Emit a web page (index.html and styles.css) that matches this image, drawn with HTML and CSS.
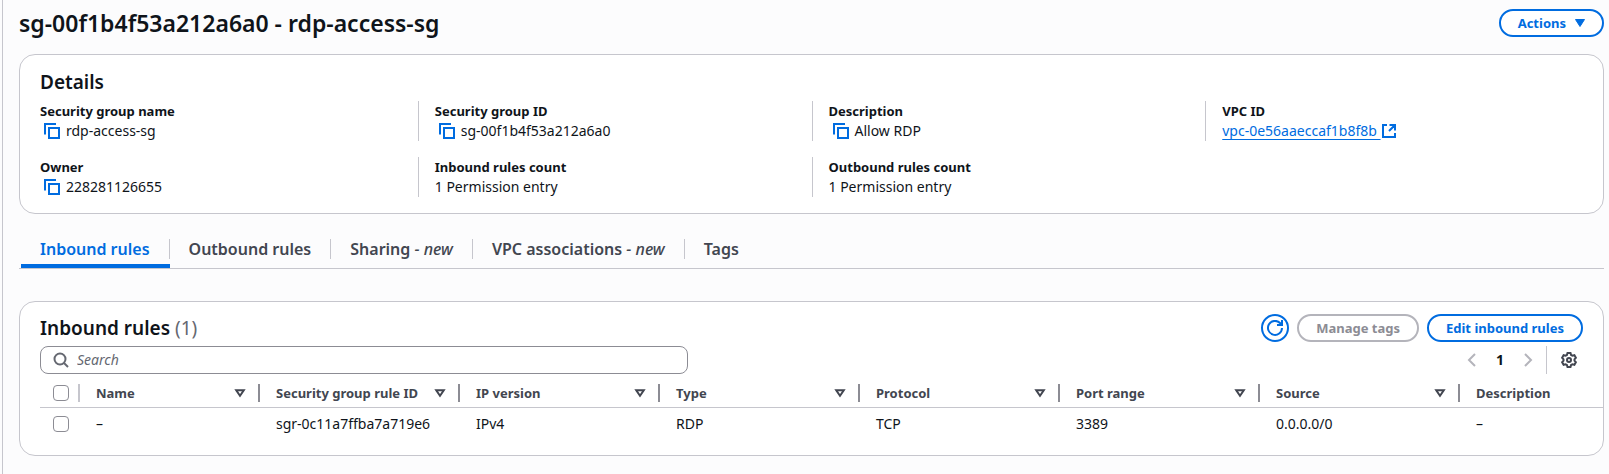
FILE: index.html
```html
<!DOCTYPE html>
<html lang="en">
<head>
<meta charset="utf-8">
<title>sg-00f1b4f53a212a6a0 - rdp-access-sg</title>
<link rel="stylesheet" href="styles.css">
</head>
<body>
<svg class="sprite" aria-hidden="true">
  <symbol id="copy" viewBox="0 0 16 16"><path d="M1 11.5V1h11M5 5h10v10H5z"/></symbol>
  <symbol id="sort" viewBox="0 0 16 16"><path d="M4.2 5.2h7.6L8 10.8z"/></symbol>
</svg>
<main class="page">
  <header class="page-header">
    <h1 class="page-title">sg-00f1b4f53a212a6a0 - rdp-access-sg</h1>
    <button class="button" type="button">Actions <svg class="icon caret" viewBox="3 0 10 16" aria-hidden="true"><path d="M3.500 4.500h9L8 11.500z"/></svg></button>
  </header>

  <section class="card details">
    <h2 class="card-title">Details</h2>
    <dl class="fields">
      <div class="field"><dt>Security group name</dt><dd><button class="copy" type="button" aria-label="Copy security group name"><svg class="icon"><use href="#copy"/></svg></button>rdp-access-sg</dd></div>
      <div class="field"><dt>Security group ID</dt><dd><button class="copy" type="button" aria-label="Copy security group ID"><svg class="icon"><use href="#copy"/></svg></button>sg-00f1b4f53a212a6a0</dd></div>
      <div class="field"><dt>Description</dt><dd><button class="copy" type="button" aria-label="Copy description"><svg class="icon"><use href="#copy"/></svg></button>Allow RDP</dd></div>
      <div class="field"><dt>VPC ID</dt><dd><a class="link" href="#vpc"><span class="link-text">vpc-0e56aaeccaf1b8f8b&nbsp;</span><svg class="icon" viewBox="0 0 16 16" aria-hidden="true"><path d="M6 2H2v12h12V10M8.500 2H14v5.500M13.500 2.500 8 8"/></svg></a></dd></div>
      <div class="field"><dt>Owner</dt><dd><button class="copy" type="button" aria-label="Copy owner"><svg class="icon"><use href="#copy"/></svg></button>228281126655</dd></div>
      <div class="field"><dt>Inbound rules count</dt><dd>1 Permission entry</dd></div>
      <div class="field"><dt>Outbound rules count</dt><dd>1 Permission entry</dd></div>
    </dl>
  </section>

  <div class="tabs" role="tablist">
    <button class="tab active" type="button" role="tab" aria-selected="true"><span>Inbound rules</span></button>
    <button class="tab" type="button" role="tab"><span>Outbound rules</span></button>
    <button class="tab" type="button" role="tab"><span>Sharing <i>- new</i></span></button>
    <button class="tab" type="button" role="tab"><span>VPC associations <i>- new</i></span></button>
    <button class="tab" type="button" role="tab"><span>Tags</span></button>
  </div>

  <section class="card rules">
    <div class="rules-header">
      <h2 class="card-title">Inbound rules <span class="counter">(1)</span></h2>
      <div class="actions">
        <button class="button round" type="button" aria-label="Refresh"><svg class="icon" viewBox="0 0 16 16" aria-hidden="true"><path d="M15 8a7 7 0 1 1-2-5l2 2M15 0v5h-5"/></svg></button>
        <button class="button" type="button" disabled>Manage tags</button>
        <button class="button" type="button">Edit inbound rules</button>
      </div>
    </div>
    <div class="tools">
      <label class="search">
        <svg class="icon" viewBox="0 0 16 16" aria-hidden="true"><circle cx="7" cy="7" r="5.500"/><path d="m11 11 4 4"/></svg>
        <input type="search" placeholder="Search" aria-label="Search">
      </label>
      <nav class="pagination" aria-label="Pagination">
        <button class="page-arrow" type="button" aria-label="Previous page" disabled><svg class="icon" viewBox="0 0 16 16"><path d="M11 2 5 8l6 6"/></svg></button>
        <button class="page-number" type="button" aria-current="page">1</button>
        <button class="page-arrow" type="button" aria-label="Next page" disabled><svg class="icon" viewBox="0 0 16 16"><path d="m5 2 6 6-6 6"/></svg></button>
        <button class="settings" type="button" aria-label="Preferences"><svg class="icon" viewBox="0 0 16 16"><circle cx="8" cy="8" r="2"/><path d="M6.500 1h3l.6 2 1.300.7 2-.5 1.500 2.600L13.500 7.300v1.400l1.400 1.500-1.500 2.600-2-.5-1.300.7-.6 2h-3l-.6-2-1.300-.7-2 .5-1.500-2.600 1.400-1.500V7.300L1.100 5.800l1.500-2.600 2 .5L5.900 3z"/></svg></button>
      </nav>
    </div>
    <table class="table">
      <colgroup><col class="col-check"><col class="col-name"><col class="col"><col class="col"><col class="col"><col class="col"><col class="col"><col class="col"><col></colgroup>
      <thead>
        <tr>
          <th class="check"><div class="head muted"><input type="checkbox" aria-label="Select all rules"></div></th>
          <th><div class="head">Name<svg class="icon"><use href="#sort"/></svg></div></th>
          <th><div class="head">Security group rule ID<svg class="icon"><use href="#sort"/></svg></div></th>
          <th><div class="head">IP version<svg class="icon"><use href="#sort"/></svg></div></th>
          <th><div class="head">Type<svg class="icon"><use href="#sort"/></svg></div></th>
          <th><div class="head">Protocol<svg class="icon"><use href="#sort"/></svg></div></th>
          <th><div class="head">Port range<svg class="icon"><use href="#sort"/></svg></div></th>
          <th><div class="head">Source<svg class="icon"><use href="#sort"/></svg></div></th>
          <th><div class="head last">Description</div></th>
        </tr>
      </thead>
      <tbody>
        <tr>
          <td class="check"><input type="checkbox" aria-label="Select rule sgr-0c11a7ffba7a719e6"></td>
          <td>–</td><td>sgr-0c11a7ffba7a719e6</td><td>IPv4</td><td>RDP</td><td>TCP</td><td>3389</td><td>0.0.0.0/0</td><td>–</td>
        </tr>
      </tbody>
    </table>
  </section>
</main>
</body>
</html>
```
FILE: styles.css
```css
* { box-sizing: border-box; }
body {
  margin: 0;
  background: #fcfcfd;
  color: #0f141a;
  font: 14px/20px "Noto Sans", "Open Sans", sans-serif;
}
button, input { font: inherit; color: inherit; }
button { padding: 0; border: 0; background: none; }
h1, h2, dl, dd { margin: 0; }
.sprite { display: none; }
.icon {
  width: 16px;
  height: 16px;
  flex: none;
  display: block;
  fill: none;
  stroke: currentColor;
  stroke-width: 2;
}
.page {
  min-height: 100vh;
  margin-left: 2px;
  padding: 9px 5px 18px 16px;
  border-left: 1px solid #c6c6cd;
}
.page-header {
  display: flex;
  justify-content: space-between;
  align-items: center;
  margin-bottom: 17px;
}
.page-title { font-size: 23px; line-height: 28px; font-weight: 600; }
.button {
  display: flex;
  align-items: center;
  gap: 9px;
  height: 28px;
  padding: 0 18px;
  border: 2px solid #006ce0;
  border-radius: 14px;
  background: #fff;
  color: #006ce0;
  font-size: 13px;
  font-weight: 700;
}
.actions .button { padding: 0 17px; }
.page-header .button { padding: 0 17px; }
.button:disabled { border-color: #b4b4bb; color: #8c8c94; }
.actions .round { width: 28px; padding: 0; justify-content: center; }
.caret { width: 10px; fill: currentColor; stroke-width: 1; }
.card {
  border: 1px solid #c6c6cd;
  border-radius: 16px;
  background: #fff;
}
.card-title { font-size: 19px; line-height: 24px; font-weight: 600; }
.details { padding: 15px 20px 16px; }
.fields {
  display: grid;
  grid-template-columns: repeat(4, 1fr);
  row-gap: 16px;
  margin: 7px -16px 0;
}
.field { padding-left: 16px; border-left: 1px solid #c6c6cd; }
.field:nth-child(4n + 1) { border-left: 0; }
dt { font-size: 13px; font-weight: 700; }
dd { display: flex; align-items: center; }
.copy { margin: 0 6px 0 4px; color: #006ce0; }
.link { display: flex; align-items: center; color: #006ce0; text-decoration: none; }
.link-text { text-decoration: underline; text-underline-offset: 3px; }
.tabs {
  display: flex;
  margin: 16px 0 32px;
  padding-left: 2px;
  border-bottom: 1px solid #c6c6cd;
}
.tab {
  padding: 9px 0 5px;
  border-bottom: 4px solid transparent;
  color: #424650;
  font-size: 16px;
  line-height: 20px;
  font-weight: 600;
}
.tab span { display: block; padding: 0 19px; border-right: 1px solid #c6c6cd; }
.tab i { font-weight: 500; }
.tab:last-child span { border-right: 0; }
.tab.active { border-color: #006ce0; color: #006ce0; }
.rules { padding: 12px 0 15px 20px; overflow: hidden; }
.rules-header, .tools {
  display: flex;
  justify-content: space-between;
  align-items: center;
  padding-right: 20px;
}
.counter { color: #656871; font-weight: 400; }
.actions { display: flex; gap: 8px; }
.tools { margin: 4px 0 2px; }
.search {
  display: flex;
  align-items: center;
  gap: 8px;
  width: 42%;
  height: 28px;
  padding: 0 12px;
  border: 1px solid #8c8c94;
  border-radius: 8px;
  color: #656871;
}
.search input { flex: 1; min-width: 0; padding: 0; border: 0; outline: 0; background: none; }
.search input::placeholder { color: #656871; font-style: italic; }
.pagination { display: flex; align-items: center; height: 28px; }
.page-arrow { width: 24px; padding: 0 4px; color: #b4b4bb; }
.page-number { width: 32px; font-weight: 700; }
.settings {
  display: flex;
  align-items: center;
  height: 28px;
  margin-left: 6px;
  padding: 0 6px 0 14px;
  border-left: 1px solid #c6c6cd;
  color: #424650;
}
.table { width: 100%; table-layout: fixed; border-collapse: separate; border-spacing: 0; }
.col-check { width: 40px; }
.col-name { width: 180px; }
.col { width: 200px; }
th, td { height: 32px; padding: 0 0 0 16px; text-align: left; white-space: nowrap; }
th {
  padding-top: 2px;
  border-bottom: 1px solid #c6c6cd;
  color: #424650;
  font-size: 13px;
  font-weight: 700;
}
.check { padding-left: 13px; }
.head {
  display: flex;
  align-items: center;
  justify-content: space-between;
  height: 18px;
  padding-right: 10px;
  border-right: 2px solid #8c8c94;
}
.head.muted { border-color: #c6c6cd; padding: 0; }
.head.last { border: 0; }
input[type="checkbox"] {
  appearance: none;
  display: block;
  width: 16px;
  height: 16px;
  margin: 0;
  border: 1px solid #8c8c94;
  border-radius: 4px;
  background: #fff;
}
```
